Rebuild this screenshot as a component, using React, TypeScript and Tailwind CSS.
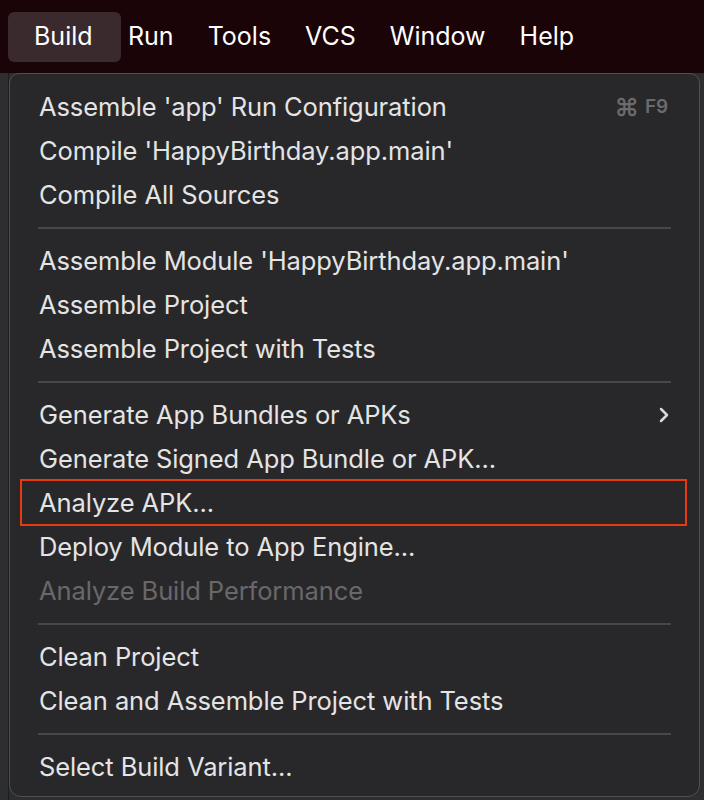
import { ChevronRight } from "lucide-react";

type Item = { label: string; shortcut?: string; submenu?: boolean; disabled?: boolean; marked?: boolean };

const groups: Item[][] = [
  [
    { label: "Assemble 'app' Run Configuration", shortcut: "F9" },
    { label: "Compile 'HappyBirthday.app.main'" },
    { label: "Compile All Sources" },
  ],
  [
    { label: "Assemble Module 'HappyBirthday.app.main'" },
    { label: "Assemble Project" },
    { label: "Assemble Project with Tests" },
  ],
  [
    { label: "Generate App Bundles or APKs", submenu: true },
    { label: "Generate Signed App Bundle or APK..." },
    { label: "Analyze APK...", marked: true },
    { label: "Deploy Module to App Engine..." },
    { label: "Analyze Build Performance", disabled: true },
  ],
  [{ label: "Clean Project" }, { label: "Clean and Assemble Project with Tests" }],
  [{ label: "Select Build Variant..." }],
];

const menus = ["Run", "Tools", "VCS", "Window", "Help"];

const MenuRow = ({ item }: { item: Item }) => (
  <div className="relative mx-[12px] h-[44px] px-[17px] flex items-center justify-between">
    <span className={item.disabled ? "text-[#68686a]" : "text-[#e4e4e4]"}>{item.label}</span>
    {item.shortcut && (
      <span className="flex items-center gap-[6px] pr-[2px] text-[#6b6b6d] font-semibold">
        <span className="text-[25px] leading-none">⌘</span>
        <span className="text-[19px]">{item.shortcut}</span>
      </span>
    )}
    {item.submenu && <ChevronRight className="w-[24px] h-[24px] text-[#dadada] -mr-[6px]" strokeWidth={2.5} />}
    {item.marked && <span className="absolute -left-[2px] -right-[0px] -top-[2px] -bottom-[1px] border-2 border-[#e83a10]" />}
  </div>
);

const App = () => {
  return (
    <div
      className="w-[704px] h-[800px] overflow-hidden bg-[#202022] flex flex-col"
      style={{ fontFamily: "Inter, 'Noto Sans', sans-serif" }}
    >
      <div className="h-[73px] shrink-0 bg-[#1a0407] flex items-center pl-[8px] text-[25px] text-white">
        <div className="h-[50px] w-[113px] flex items-center pl-[26px] rounded-[6px] bg-[#3b2a2d]">Build</div>
        <div className="flex items-center gap-[34px] ml-[7px]">
          {menus.map((m) => (
            <span key={m}>{m}</span>
          ))}
        </div>
      </div>
      <div className="flex-1 flex bg-[#2d2e30]">
        <div className="w-[9px] border-r border-[#1d1d1f]" />
        <div className="w-[691px] h-[724px] rounded-b-[12px] rounded-t-[10px] border border-[#505053] bg-[#28282a] pt-[11px] pb-[7px] text-[25.5px] tracking-[-0.1px]">
          {groups.map((g, gi) => (
            <div key={gi}>
              {gi > 0 && (
                <div className="h-[22px] flex items-center px-[28px]">
                  <div className="w-full h-[2px] bg-[#48484a]" />
                </div>
              )}
              {g.map((item) => (
                <MenuRow key={item.label} item={item} />
              ))}
            </div>
          ))}
        </div>
      </div>
    </div>
  );
};

export default App;
